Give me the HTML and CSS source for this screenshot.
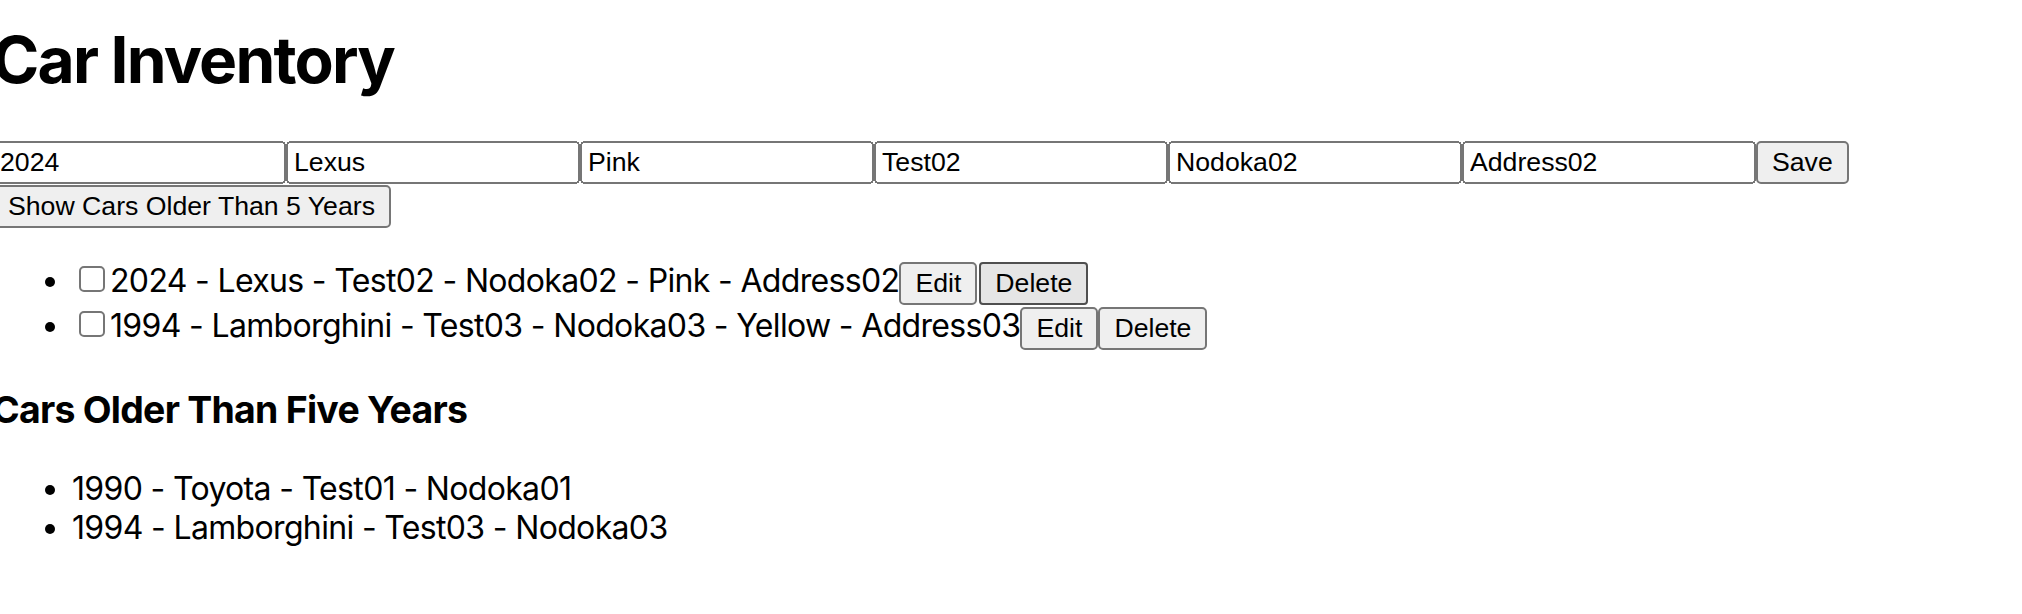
FILE: index.html
```html
<!DOCTYPE html>
<html>
<head>
<meta charset="utf-8">
<title>Car Inventory</title>
<link rel="stylesheet" href="styles.css">
</head>
<body>
<div class="app">
  <h1 class="title">Car Inventory</h1>
  <div class="form"><input class="field" type="text" value="2024"><input class="field" type="text" value="Lexus"><input class="field" type="text" value="Pink"><input class="field" type="text" value="Test02"><input class="field" type="text" value="Nodoka02"><input class="field" type="text" value="Address02"><button class="btn">Save</button></div>
  <button class="btn">Show Cars Older Than 5 Years</button>
  <ul class="list">
    <li class="item"><input class="check" type="checkbox">2024 - Lexus - Test02 - Nodoka02 - Pink - Address02<button class="btn">Edit</button><button class="btn btn-hover">Delete</button></li>
    <li class="item"><input class="check" type="checkbox">1994 - Lamborghini - Test03 - Nodoka03 - Yellow - Address03<button class="btn">Edit</button><button class="btn">Delete</button></li>
  </ul>
  <h3 class="subtitle">Cars Older Than Five Years</h3>
  <ul class="list">
    <li class="item">1990 - Toyota - Test01 - Nodoka01</li>
    <li class="item">1994 - Lamborghini - Test03 - Nodoka03</li>
  </ul>
</div>
</body>
</html>
```

FILE: styles.css
```css
html, body {
  margin: 0;
  padding: 0;
  background: #ffffff;
}

.app {
  zoom: 2;
  margin-left: -4px;
  font-family: Inter, "Noto Sans", sans-serif;
  font-size: 16px;
  color: #000000;
}

.title {
  font-size: 32px;
  font-weight: 700;
  margin: 10.5px 0 20.8px;
  letter-spacing: -0.9px;
}

.form {
  display: block;
}

.field {
  box-sizing: border-box;
  width: 147px;
  font-family: "Liberation Sans", Arial, sans-serif;
  font-size: 13.333px;
  letter-spacing: 0;
}

.btn {
  font-family: "Liberation Sans", Arial, sans-serif;
  font-size: 13.333px;
  letter-spacing: 0;
}

.btn-hover {
  background-color: #e5e5e5;
  border: 1px solid #4f4f4f;
  border-radius: 2px;
  padding: 2px 7px;
  margin-left: 1px;
}

.list {
  margin: 16px 0;
  padding-left: 40px;
}

.item {
  letter-spacing: -0.33px;
}

.check {
  margin: 3px 2.5px 3px 3.5px;
}

.subtitle {
  font-size: 18.72px;
  font-weight: 700;
  margin: 18.72px 0;
  letter-spacing: -0.37px;
}
```
